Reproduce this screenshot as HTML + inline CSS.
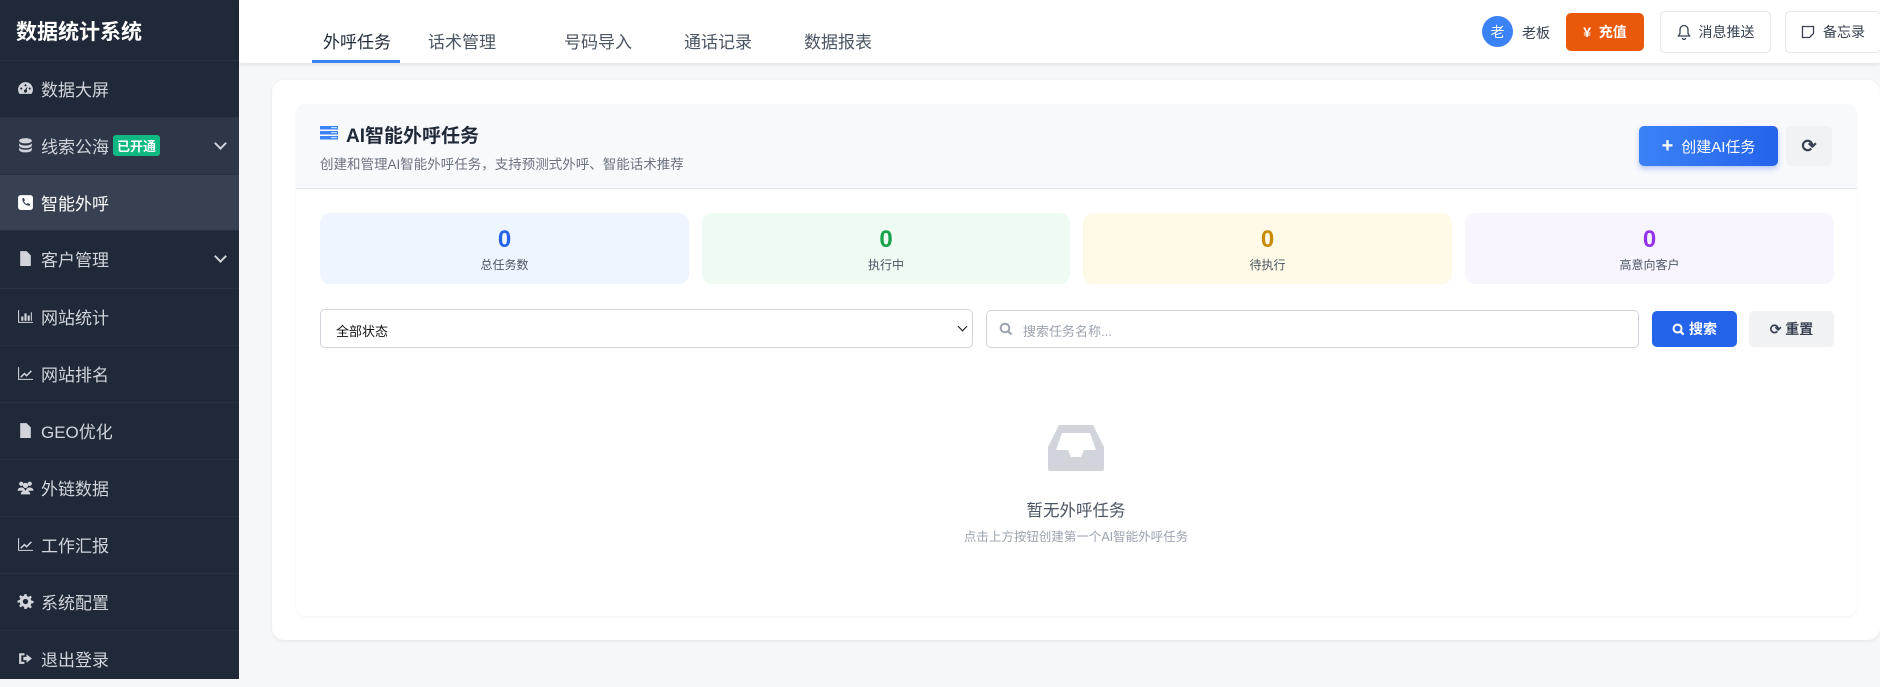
<!DOCTYPE html>
<html><head><meta charset="utf-8"><style>
*{box-sizing:border-box;margin:0;padding:0}
body{width:1880px;height:679px;overflow:hidden;background:#f6f7f9;font-family:"Liberation Sans","Noto Sans CJK SC",sans-serif;position:relative}
.abs{position:absolute}
.side{left:0;top:0;width:239px;height:679px;background:#1f2937;color:#d1d5db}
.side .t{position:absolute;left:16px;top:16px;font-size:21px;font-weight:bold;color:#fff}
.item{position:absolute;left:0;width:239px;height:57px;border-top:1px solid #273142;display:flex;align-items:center;padding-left:17px;font-size:17px;color:#d1d5db;padding-bottom:2px}
.item svg{width:17px;height:17px;margin-right:7px;fill:#d1d5db}
.chev{position:absolute;right:14px;top:21px;width:9px;height:9px;border-right:2.5px solid #d1d5db;border-bottom:2.5px solid #d1d5db;transform:rotate(45deg)}
.header{left:239px;top:0;width:1641px;height:63px;background:#fff;box-shadow:0 2px 4px rgba(0,0,0,.08)}
.tab{position:absolute;top:28px;font-size:17px;color:#4b5563}
.btn{position:absolute;display:flex;align-items:center;justify-content:center;border-radius:5px;font-size:15px}
.stat{position:absolute;top:213px;height:71px;border-radius:10px;text-align:center}
.stat b{display:block;font-size:24px;margin-top:13px;line-height:28px}
.stat span{display:block;font-size:12px;color:#4b5563;margin-top:2px}
</style></head><body>
<div class="abs side">
<div class="t">数据统计系统</div>
<div class="item" style="top:60px"><svg viewBox="0 0 16 16"><path d="M8 2a7 7 0 0 0-7 7c0 1.5.5 2.8 1.3 4h11.4A7 7 0 0 0 8 2zm0 2a1 1 0 1 1 0 2 1 1 0 0 1 0-2zM4 7a1 1 0 1 1 0 2 1 1 0 0 1 0-2zm8 0a1 1 0 1 1 0 2 1 1 0 0 1 0-2zM8 12a1.5 1.5 0 0 1-.5-2.9L10 6l-1 3.4A1.5 1.5 0 0 1 8 12z"/></svg>数据大屏</div>
<div class="item" style="top:117px;background:#2d3748"><svg viewBox="0 0 16 16"><ellipse cx="8" cy="3.5" rx="6" ry="2.5"/><path d="M2 5.5c0 1.4 2.7 2.5 6 2.5s6-1.1 6-2.5V8c0 1.4-2.7 2.5-6 2.5S2 9.4 2 8zm0 4c0 1.4 2.7 2.5 6 2.5s6-1.1 6-2.5V12c0 1.4-2.7 2.5-6 2.5S2 13.4 2 12z"/></svg>线索公海<span style="margin-left:4px;background:#10b981;color:#fff;font-size:13px;font-weight:bold;padding:1px 4px;border-radius:3px">已开通</span><div class="chev"></div></div>
<div class="item" style="top:174px;background:#374151;color:#fff"><svg viewBox="0 0 16 16" style="fill:#fff"><rect x="1" y="1" width="14" height="14" rx="2.5"/><path d="M5 4l1.5-.3 1 2.3-1 .8a6 6 0 0 0 2.7 2.7l.8-1 2.3 1-.3 1.5c-4 .3-7.3-3-7-7z" fill="#374151"/></svg>智能外呼</div>
<div class="item" style="top:230px"><svg viewBox="0 0 16 16"><path d="M3 1h6l4 4v10H3zM5 8h6v1H5zm0 2h6v1H5zm0 2h6v1H5z"/></svg>客户管理<div class="chev"></div></div>
<div class="item" style="top:288px"><svg viewBox="0 0 16 16"><path d="M1 2h1v11h13v1H1zm3 6h2v4H4zm3-3h2v7H7zm3 2h2v5h-2zm3-3h1v8h-1z"/></svg>网站统计</div>
<div class="item" style="top:345px"><svg viewBox="0 0 16 16"><path d="M1 2h1v11h13v1H1zm2 9l4-4 2 2 4-4 1 1-5 5-2-2-3 3z"/></svg>网站排名</div>
<div class="item" style="top:402px"><svg viewBox="0 0 16 16"><path d="M3 1h6l4 4v10H3zM5 8h6v1H5zm0 2h6v1H5zm0 2h6v1H5z"/></svg>GEO优化</div>
<div class="item" style="top:459px"><svg viewBox="0 0 16 16"><circle cx="4" cy="4.5" r="2"/><circle cx="12" cy="4.5" r="2"/><circle cx="8" cy="6" r="2.5"/><path d="M0.5 11c0-4 7-4 7 0zm8 0c0-4 7-4 7 0zM3.5 14.5c0-5 9-5 9 0z"/></svg>外链数据</div>
<div class="item" style="top:516px"><svg viewBox="0 0 16 16"><path d="M1 2h1v11h13v1H1zm2 9l4-4 2 2 4-4 1 1-5 5-2-2-3 3z"/></svg>工作汇报</div>
<div class="item" style="top:573px"><svg viewBox="0 0 16 16"><path d="M7 1h2l.4 2 1.5.7 1.7-1.2 1.4 1.4-1.2 1.7.7 1.5 2 .4v2l-2 .4-.7 1.5 1.2 1.7-1.4 1.4-1.7-1.2-1.5.7L9 15H7l-.4-2-1.5-.7-1.7 1.2L2 12.1l1.2-1.7-.7-1.5L.5 9V7l2-.4.7-1.5L2 3.4 3.4 2l1.7 1.2 1.5-.7zm1 4.5a2.5 2.5 0 1 0 0 5 2.5 2.5 0 0 0 0-5z"/></svg>系统配置</div>
<div class="item" style="top:630px"><svg viewBox="0 0 16 16"><path d="M2 3h5v2H4v6h3v2H2zm7 1l5 4-5 4V9.5H6v-3h3z"/></svg>退出登录</div>
</div>
<div class="abs header">
<div class="tab" style="left:84px;color:#1f2937">外呼任务</div>
<div class="abs" style="left:73px;top:60px;width:88px;height:3px;background:#3b82f6"></div>
<div class="tab" style="left:189px">话术管理</div>
<div class="tab" style="left:325px">号码导入</div>
<div class="tab" style="left:445px">通话记录</div>
<div class="tab" style="left:565px">数据报表</div>
<div class="abs" style="left:1243px;top:16px;width:31px;height:31px;border-radius:50%;background:#3b82f6;color:#fff;font-size:14px;display:flex;align-items:center;justify-content:center">老</div>
<div class="abs" style="left:1283px;top:23px;font-size:14px;color:#374151">老板</div>
<div class="btn" style="left:1327px;top:13px;width:78px;height:38px;background:#ea580c;color:#fff;font-weight:bold;font-size:14px">¥&nbsp;&nbsp;充值</div>
<div class="btn" style="left:1421px;top:11px;width:111px;height:42px;border:1px solid #e5e7eb;color:#374151;font-size:14px"><svg width="14" height="16" viewBox="0 0 14 16" style="margin-right:8px"><path d="M7 1.5a4 4 0 0 0-4 4v4L1.5 12h11L11 9.5v-4a4 4 0 0 0-4-4zM5.5 14a1.5 1.5 0 0 0 3 0" fill="none" stroke="#374151" stroke-width="1.3"/></svg>消息推送</div>
<div class="btn" style="left:1546px;top:11px;width:96px;height:42px;border:1px solid #e5e7eb;color:#374151;font-size:14px"><svg width="14" height="14" viewBox="0 0 14 14" style="margin-right:8px"><path d="M1.5 1.5h11v7l-4 4h-7z" fill="none" stroke="#374151" stroke-width="1.3"/></svg>备忘录</div>
</div>
<div class="abs" style="left:272px;top:80px;width:1608px;height:560px;background:#fff;border-radius:12px;box-shadow:0 1px 3px rgba(0,0,0,.08)"></div>
<div class="abs" style="left:296px;top:104px;width:1561px;height:512px;background:#fff;border-radius:10px;box-shadow:0 1px 2px rgba(0,0,0,.05)"></div>
<div class="abs" style="left:296px;top:104px;width:1561px;height:85px;background:#f8f9fc;border-bottom:1px solid #e5e7eb;border-radius:10px 10px 0 0"></div>
<svg class="abs" style="left:320px;top:126px" width="18" height="14" viewBox="0 0 18 14"><rect y="0" width="18" height="3.5" fill="#3b82f6"/><rect y="5" width="18" height="3.5" fill="#3b82f6"/><rect y="10" width="18" height="3.5" fill="#3b82f6"/><rect x="11" y="1" width="6" height="1.2" fill="#bfdbfe"/><rect x="11" y="6" width="6" height="1.2" fill="#bfdbfe"/><rect x="11" y="11" width="6" height="1.2" fill="#bfdbfe"/></svg>
<div class="abs" style="left:346px;top:121px;font-size:19px;font-weight:bold;color:#1f2937">AI智能外呼任务</div>
<div class="abs" style="left:320px;top:153px;font-size:13.5px;color:#6b7280">创建和管理AI智能外呼任务，支持预测式外呼、智能话术推荐</div>
<div class="btn" style="left:1639px;top:126px;width:139px;height:40px;background:linear-gradient(90deg,#3b82f6,#2563eb);color:#fff;box-shadow:0 3px 6px rgba(37,99,235,.3)"><b style="font-size:20px;margin-right:8px">+</b>创建AI任务</div>
<div class="btn" style="left:1786px;top:126px;width:46px;height:40px;background:#f1f2f4;color:#374151;font-size:18px;font-weight:bold">⟳</div>
<div class="stat" style="left:320px;width:369px;background:#eef5ff"><b style="color:#2563eb">0</b><span>总任务数</span></div>
<div class="stat" style="left:702px;width:368px;background:#edfbf2"><b style="color:#16a34a">0</b><span>执行中</span></div>
<div class="stat" style="left:1083px;width:369px;background:#fefae7"><b style="color:#ca8a04">0</b><span>待执行</span></div>
<div class="stat" style="left:1465px;width:369px;background:#f9f5fe"><b style="color:#9333ea">0</b><span>高意向客户</span></div>
<div class="abs" style="left:320px;top:309px;width:653px;height:39px;border:1px solid #d1d5db;border-radius:5px;font-size:13px;color:#111;padding:11px 15px">全部状态<span style="position:absolute;right:6px;top:13px;width:7px;height:7px;border-right:1.5px solid #111;border-bottom:1.5px solid #111;transform:rotate(45deg)"></span></div>
<div class="abs" style="left:986px;top:310px;width:653px;height:38px;border:1px solid #d1d5db;border-radius:5px;font-size:13px;color:#9ca3af;padding:10px 0 0 36px">搜索任务名称...<svg style="position:absolute;left:12px;top:11px" width="14" height="14" viewBox="0 0 14 14"><circle cx="6" cy="6" r="4.3" fill="none" stroke="#9ca3af" stroke-width="2"/><path d="M9 9l3.5 3.5" stroke="#9ca3af" stroke-width="2.2"/></svg></div>
<div class="btn" style="left:1652px;top:311px;width:85px;height:36px;background:#2563eb;color:#fff;font-size:14px;font-weight:bold"><svg width="13" height="13" viewBox="0 0 14 14" style="margin-right:4px"><circle cx="6" cy="6" r="4.3" fill="none" stroke="#fff" stroke-width="2.2"/><path d="M9 9l3.5 3.5" stroke="#fff" stroke-width="2.4"/></svg>搜索</div>
<div class="btn" style="left:1749px;top:311px;width:85px;height:36px;background:#f1f2f4;color:#374151;font-size:14px;font-weight:bold">⟳ 重置</div>
<svg class="abs" style="left:1048px;top:425px" width="56" height="46" viewBox="0 0 56 46"><path d="M11 0h34l11 22v22a2 2 0 0 1-2 2H2a2 2 0 0 1-2-2V22zM14 8l-6 17h12l3 7h10l3-7h12L42 8z" fill="#d1d5db" fill-rule="evenodd"/></svg>
<div class="abs" style="left:0;width:2152px;top:497px;text-align:center;font-size:16.5px;color:#4b5563">暂无外呼任务</div>
<div class="abs" style="left:0;width:2152px;top:526px;text-align:center;font-size:12.5px;color:#9ca3af">点击上方按钮创建第一个AI智能外呼任务</div>
</body></html>
